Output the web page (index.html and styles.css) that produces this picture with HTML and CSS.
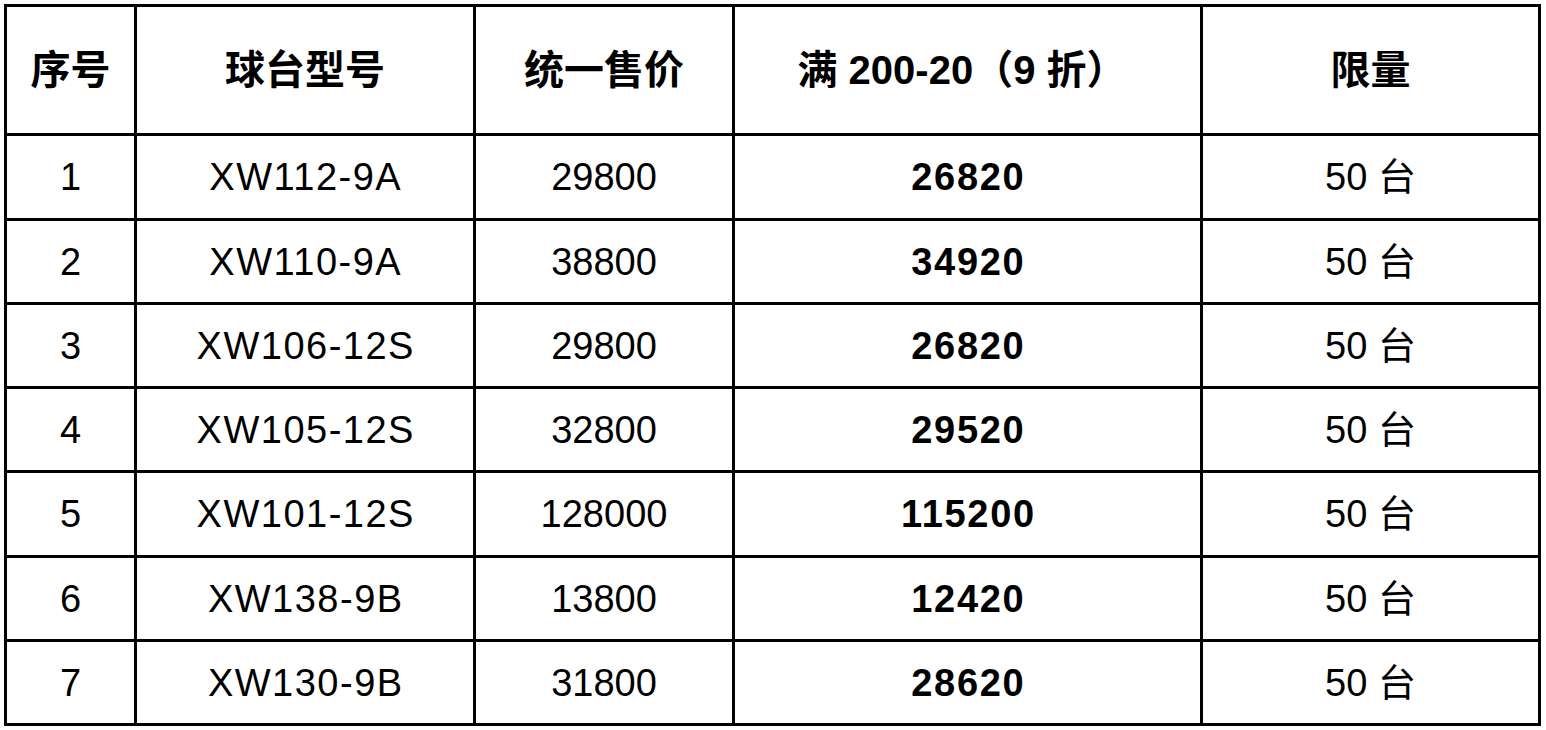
FILE: index.html
```html
<!DOCTYPE html>
<html lang="zh">
<head>
<meta charset="utf-8">
<title>球台价格表</title>
<link rel="stylesheet" href="styles.css">
</head>
<body>
<table class="price-table">
  <colgroup>
    <col class="c1"><col class="c2"><col class="c3"><col class="c4"><col class="c5">
  </colgroup>
  <thead>
    <tr class="head-row">
      <th>序号</th>
      <th>球台型号</th>
      <th>统一售价</th>
      <th class="promo">满 200-20（9 折）</th>
      <th>限量</th>
    </tr>
  </thead>
  <tbody>
    <tr class="r85"><td>1</td><td class="model">XW112-9A</td><td>29800</td><td class="bold">26820</td><td>50 台</td></tr>
    <tr class="r84"><td>2</td><td class="model">XW110-9A</td><td>38800</td><td class="bold">34920</td><td>50 台</td></tr>
    <tr class="r84"><td>3</td><td class="model">XW106-12S</td><td>29800</td><td class="bold">26820</td><td>50 台</td></tr>
    <tr class="r84"><td>4</td><td class="model">XW105-12S</td><td>32800</td><td class="bold">29520</td><td>50 台</td></tr>
    <tr class="r85"><td>5</td><td class="model">XW101-12S</td><td>128000</td><td class="bold">115200</td><td>50 台</td></tr>
    <tr class="r84"><td>6</td><td class="model">XW138-9B</td><td>13800</td><td class="bold">12420</td><td>50 台</td></tr>
    <tr class="r84"><td>7</td><td class="model">XW130-9B</td><td>31800</td><td class="bold">28620</td><td>50 台</td></tr>
  </tbody>
</table>
</body>
</html>
```

FILE: styles.css
```css
html, body {
  margin: 0;
  padding: 0;
  background: #ffffff;
}

.price-table {
  margin: 4px 0 0 4px;
  border-collapse: separate;
  border-spacing: 0;
  table-layout: fixed;
  width: 1537px;
  border-top: 3px solid #000;
  border-left: 3px solid #000;
  font-family: "Liberation Sans", "Noto Sans CJK SC", Arial, sans-serif;
  font-size: 38px;
  color: #000;
}

.c1 { width: 130px; }
.c2 { width: 339px; }
.c3 { width: 259px; }
.c4 { width: 468px; }
.c5 { width: 338px; }

.price-table th,
.price-table td {
  border-right: 3px solid #000;
  border-bottom: 3px solid #000;
  padding: 0;
  text-align: center;
  vertical-align: middle;
  box-sizing: border-box;
  line-height: 1;
  white-space: nowrap;
}

.price-table th {
  font-weight: bold;
  font-size: 40px;
}

.price-table th.promo {
  padding-right: 11px;
}

.head-row { height: 129px; }
.r85 { height: 85px; }
.r84 { height: 84px; }

.price-table td.model {
  letter-spacing: 1.5px;
  padding-left: 1.5px;
}

.price-table td.bold {
  font-weight: bold;
  letter-spacing: 1.7px;
  padding-left: 1.7px;
}
```
